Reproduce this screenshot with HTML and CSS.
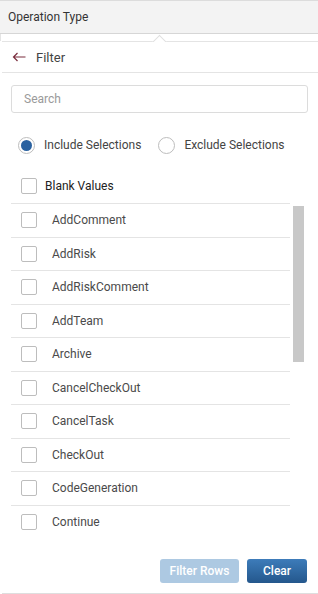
FILE: index.html
```html
<!DOCTYPE html>
<html>
<head>
<meta charset="utf-8">
<link rel="stylesheet" href="styles.css">
</head>
<body>
<div class="header">Operation Type</div>
<div class="gap"></div>
<div class="panel">
  <div class="caret"></div>
  <div class="panel-head">
    <svg class="back" width="14" height="10" viewBox="0 0 14 10"><path d="M13.5 5H1.5M5.5 1L1.5 5l4 4" fill="none" stroke="#7a2c3c" stroke-width="1.2"/></svg>
    <span>Filter</span>
  </div>
  <div class="body">
    <div class="search">Search</div>
    <div class="radios">
      <label class="radio"><span class="circle on"></span>Include Selections</label>
      <label class="radio"><span class="circle"></span>Exclude Selections</label>
    </div>
    <div class="blank"><span class="box"></span>Blank Values</div>
    <div class="list">
      <div class="rows">
        <div class="row"><span class="box"></span>AddComment</div>
        <div class="row"><span class="box"></span>AddRisk</div>
        <div class="row"><span class="box"></span>AddRiskComment</div>
        <div class="row"><span class="box"></span>AddTeam</div>
        <div class="row"><span class="box"></span>Archive</div>
        <div class="row"><span class="box"></span>CancelCheckOut</div>
        <div class="row"><span class="box"></span>CancelTask</div>
        <div class="row"><span class="box"></span>CheckOut</div>
        <div class="row"><span class="box"></span>CodeGeneration</div>
        <div class="row"><span class="box"></span>Continue</div>
      </div>
      <div class="track"><div class="thumb"></div></div>
    </div>
    <div class="actions">
      <button class="btn light">Filter Rows</button>
      <button class="btn dark">Clear</button>
    </div>
  </div>
</div>
</body>
</html>
```
FILE: styles.css
```css
* { box-sizing: border-box; }
body {
  margin: 0;
  font-family: Roboto, "Liberation Sans", sans-serif;
  font-size: 12px;
  color: #444;
  background: #fff;
  width: 318px;
  height: 594px;
  overflow: hidden;
}
.header {
  height: 34px;
  background: #f3f3f3;
  border-top: 1px solid #dcdcdc;
  border-bottom: 1px solid #d6d6d6;
  padding-left: 8px;
  display: flex;
  align-items: center;
  color: #333;
}
.gap {
  height: 7px;
  border-left: 1px solid #e4e4e4;
}
.panel {
  position: relative;
  border-top: 1px solid #e4e4e4;
  border-bottom: 1px solid #dedede;
  height: 553px;
  margin-left: 2px;
  display: flex;
  flex-direction: column;
}
.caret {
  position: absolute;
  left: 152px;
  top: -5px;
  width: 11px;
  height: 11px;
  background: #fff;
  border-left: 1px solid #e0e0e0;
  border-top: 1px solid #e0e0e0;
  transform: rotate(45deg);
}
.panel-head {
  height: 31px;
  border-bottom: 1px solid #e4e4e4;
  display: flex;
  align-items: center;
  padding-left: 10px;
  font-size: 13px;
  color: #444;
  position: relative;
  background: #fff;
}
.panel-head .back { margin-right: 10px; }
.body {
  padding: 12px 10px 0 9px;
  display: flex;
  flex-direction: column;
  flex: 1;
}
.search {
  height: 28px;
  border: 1px solid #dcdcdc;
  border-radius: 3px;
  padding-left: 12px;
  display: flex;
  align-items: center;
  color: #9a9a9a;
}
.radios {
  display: flex;
  align-items: center;
  margin-top: 23px;
  height: 18px;
  padding-left: 7px;
  gap: 17px;
}
.radio { display: flex; align-items: center; color: #444; }
.circle {
  width: 17px;
  height: 17px;
  border-radius: 50%;
  border: 1px solid #bdbdbd;
  margin-right: 9px;
  display: flex;
  align-items: center;
  justify-content: center;
}
.circle.on::after {
  content: "";
  width: 11px;
  height: 11px;
  border-radius: 50%;
  background: #2b62a0;
}
.box {
  width: 16px;
  height: 16px;
  border: 1px solid #bdbdbd;
  border-radius: 2px;
  flex: none;
}
.blank {
  display: flex;
  align-items: center;
  margin-top: 21px;
  height: 29px;
  padding: 0 0 6px 10px;
  color: #222;
  border-bottom: 1px solid #e4e4e4;
  width: 279px;
}
.blank .box { margin-right: 8px; }
.list {
  display: flex;
  height: 334px;
  overflow: hidden;
}
.rows { width: 279px; }
.row {
  height: 33.5px;
  border-bottom: 1px solid #e4e4e4;
  display: flex;
  align-items: center;
  padding-left: 10px;
  color: #4a4a4a;
}
.row .box { margin-right: 15px; }
.track { width: 11px; margin-left: 3px; }
.thumb {
  margin-top: 2px;
  height: 156px;
  background: #c8c8c8;
}
.actions {
  display: flex;
  justify-content: flex-end;
  gap: 8px;
  margin-top: 21px;
  padding-right: 1px;
}
.btn {
  height: 24px;
  border: none;
  border-radius: 3px;
  font-family: Roboto, "Liberation Sans", sans-serif;
  font-size: 12px;
  font-weight: 500;
  color: #fff;
  padding: 0;
}
.btn.light { width: 79px; background: #adc9e2; }
.btn.dark {
  width: 60px;
  background: linear-gradient(#3d7cba, #24578c);
}
```
